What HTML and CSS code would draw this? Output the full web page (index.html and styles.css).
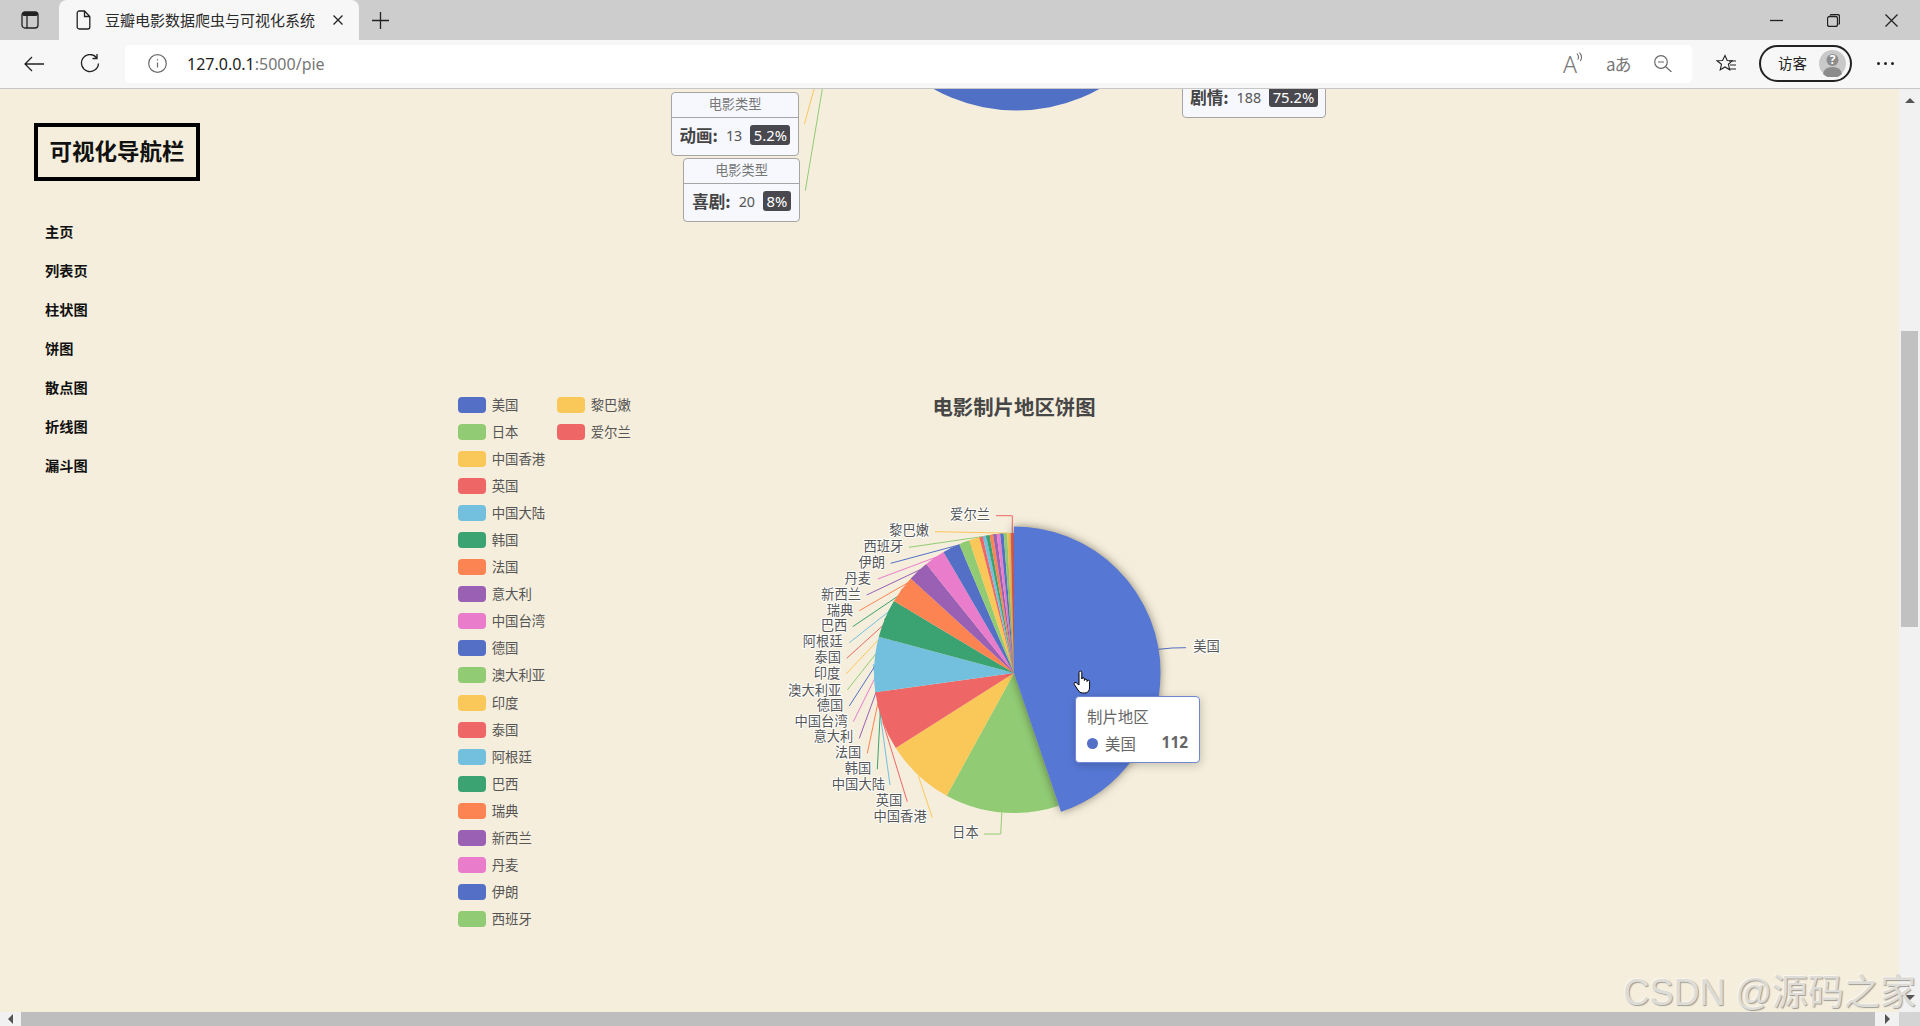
FILE: index.html
```html
<!DOCTYPE html>
<html lang="zh-CN">
<head>
<meta charset="utf-8">
<title>豆瓣电影数据爬虫与可视化系统</title>
<link rel="stylesheet" href="styles.css">
</head>
<body>
<header class="tabbar">
  <svg class="ic-tabs" viewBox="0 0 18 18"><rect x="1" y="1" width="16" height="16" rx="3" class="ink"/><rect x="1" y="1" width="16" height="4" rx="2" class="fill-ink"/><path d="M6 5v12" class="ink"/></svg>
  <div class="tab">
    <svg class="ic-doc" viewBox="0 0 15 20"><path d="M1.2 3a2 2 0 0 1 2-2h5.3l5.3 5.5V17a2 2 0 0 1-2 2H3.2a2 2 0 0 1-2-2z M8.5 1v5.5h5.3" class="ink"/></svg>
    <span class="tab-title">豆瓣电影数据爬虫与可视化系统</span>
    <svg class="ic-close" viewBox="0 0 10 10"><path d="M.5.5l9 9M9.5.5l-9 9" class="ink"/></svg>
  </div>
  <svg class="ic-plus" viewBox="0 0 17 17"><path d="M8.5 0v17M0 8.5h17" class="ink"/></svg>
  <div class="win-controls">
    <svg class="ic-min" viewBox="0 0 13 13"><path d="M0 6.5h13" class="ink"/></svg>
    <svg class="ic-restore" viewBox="0 0 13 13"><path d="M3.5 1.5V1a1 1 0 0 1 1-.5h6a2 2 0 0 1 2 2v6.500a1 1 0 0 1-.5 1h-.5" class="ink"/><rect x=".5" y="2.500" width="10" height="10" rx="2" class="ink"/></svg>
    <svg class="ic-winclose" viewBox="0 0 13 13"><path d="M.5.5l12 12M12.500.5l-12 12" class="ink"/></svg>
  </div>
</header>

<nav class="toolbar">
  <svg class="ic-back" viewBox="0 0 20 16"><path d="M20 8H1M8 1L1 8l7 7" class="ink"/></svg>
  <svg class="ic-reload" viewBox="0 0 20 19"><path d="M16.500 3.500A8.500 8.500 0 1 0 18.500 9.500M17 0v4.500h-4.500" class="ink"/></svg>
  <div class="addressbar">
    <svg class="ic-info" viewBox="0 0 19 19"><circle cx="9.500" cy="9.500" r="8.800" class="soft"/><path d="M9.500 8.500v5M9.500 5.200v1.400" class="soft"/></svg>
    <span class="url"><span class="url-host">127.0.0.1</span>:5000/pie</span>
    <span class="addr-tools">
      <span class="read-aloud"><span class="read-a">A</span><svg class="ic-waves" viewBox="0 0 8 11"><path d="M1 1.500q3 3 1 7M4 .500q4 4.500 1 9.500" class="soft"/></svg></span>
      <span class="translate">aあ</span>
      <svg class="ic-zoom" viewBox="0 0 18 17"><circle cx="7" cy="7" r="6.300" class="soft"/><path d="M4 7h6M11.500 11.500l6 5.500" class="soft"/></svg>
    </span>
  </div>
  <svg class="ic-fav" viewBox="0 0 21 19"><path d="M9 1.500l2.200 5 5 .3-3.800 3.500 1.300 5.500L9 13l-4.800 2.800 1.300-5.500L1 6.800l5.500-.3z" class="ink-thin"/><path d="M13 7h7M14 11h6M13 15h7" class="ink-thin"/></svg>
  <div class="profile">
    <span class="profile-name">访客</span>
    <span class="avatar">
      <svg class="ic-avatar" viewBox="0 0 27 27"><circle cx="13.500" cy="13.500" r="13.500" class="av-bg"/><circle cx="13.500" cy="10" r="6" class="av-fg"/><path d="M4 24q1-7 9.500-7t9.500 7a13.500 13.500 0 0 1-19 0z" class="av-fg"/></svg>
      <span class="avatar-q">?</span>
    </span>
  </div>
  <span class="more"><i></i><i></i><i></i></span>
</nav>

<div class="view-row">
  <main class="page">
    <aside class="sidebar">
      <h1 class="brand">可视化导航栏</h1>
      <ul class="nav">
        <li>主页</li><li>列表页</li><li>柱状图</li><li>饼图</li><li>散点图</li><li>折线图</li><li>漏斗图</li>
      </ul>
    </aside>

    <section class="charts">
      <svg class="chart-svg" viewBox="220 89 1679 923">
        <circle cx="1016.500" cy="-60" r="170.500" class="top-pie"/>
        <line x1="816" y1="82" x2="804.400" y2="124" class="ln c2"/>
        <line x1="823.500" y1="82" x2="805.300" y2="190.700" class="ln c1"/>

        <text x="1014" y="405.500" class="chart-title">电影制片地区饼图</text>

        <g class="lines">
          <polyline points="1158.500,649.300 1172,648 1186,647.700" class="ln c0"/>
          <polyline points="1001.800,812.500 1000.700,834 984,834" class="ln c1"/>
          <line x1="932.300" y1="817.700" x2="918.200" y2="775.400" class="ln c2"/>
          <line x1="907.300" y1="801.700" x2="882.600" y2="721.300" class="ln c3"/>
          <line x1="890" y1="785" x2="873.300" y2="664.200" class="ln c4"/>
          <line x1="877.300" y1="769.300" x2="885.200" y2="618.200" class="ln c5"/>
          <line x1="867.300" y1="753.300" x2="901.800" y2="589.200" class="ln c6"/>
          <line x1="859.300" y1="738.300" x2="918.100" y2="577.100" class="ln c7"/>
          <line x1="853.300" y1="721.700" x2="934.600" y2="557.700" class="ln c8"/>
          <line x1="849.300" y1="706" x2="951.200" y2="547.500" class="ln c0"/>
          <line x1="847.300" y1="690" x2="964" y2="542.100" class="ln c1"/>
          <line x1="846" y1="674" x2="974" y2="538.800" class="ln c2"/>
          <line x1="846.700" y1="658.300" x2="980.900" y2="537" class="ln c3"/>
          <line x1="849.300" y1="642.700" x2="984.300" y2="536.200" class="ln c4"/>
          <line x1="852.700" y1="626.700" x2="987.800" y2="535.500" class="ln c5"/>
          <line x1="859.300" y1="610.700" x2="991.200" y2="534.800" class="ln c6"/>
          <line x1="866.700" y1="595" x2="994.700" y2="534.300" class="ln c7"/>
          <line x1="877.700" y1="579" x2="998.200" y2="533.900" class="ln c8"/>
          <line x1="890.700" y1="563.300" x2="1001.700" y2="533.500" class="ln c0"/>
          <line x1="909" y1="547.300" x2="1005.200" y2="533.300" class="ln c1"/>
          <line x1="935" y1="531.700" x2="1008.700" y2="533.100" class="ln c2"/>
          <polyline points="996,515.700 1012.300,515.700 1012.300,533" class="ln c3"/>
        </g>

        <g class="pie" transform="rotate(-90 1014 673)">
          <circle cx="1014" cy="673" r="70" pathLength="250" stroke-dasharray="33 217" stroke-dashoffset="-112" class="sl c1"/>
          <circle cx="1014" cy="673" r="70" pathLength="250" stroke-dasharray="20 230" stroke-dashoffset="-145" class="sl c2"/>
          <circle cx="1014" cy="673" r="70" pathLength="250" stroke-dasharray="17 233" stroke-dashoffset="-165" class="sl c3"/>
          <circle cx="1014" cy="673" r="70" pathLength="250" stroke-dasharray="16 234" stroke-dashoffset="-182" class="sl c4"/>
          <circle cx="1014" cy="673" r="70" pathLength="250" stroke-dasharray="11 239" stroke-dashoffset="-198" class="sl c5"/>
          <circle cx="1014" cy="673" r="70" pathLength="250" stroke-dasharray="8 242" stroke-dashoffset="-209" class="sl c6"/>
          <circle cx="1014" cy="673" r="70" pathLength="250" stroke-dasharray="6 244" stroke-dashoffset="-217" class="sl c7"/>
          <circle cx="1014" cy="673" r="70" pathLength="250" stroke-dasharray="6 244" stroke-dashoffset="-223" class="sl c8"/>
          <circle cx="1014" cy="673" r="70" pathLength="250" stroke-dasharray="5 245" stroke-dashoffset="-229" class="sl c0"/>
          <circle cx="1014" cy="673" r="70" pathLength="250" stroke-dasharray="3 247" stroke-dashoffset="-234" class="sl c1"/>
          <circle cx="1014" cy="673" r="70" pathLength="250" stroke-dasharray="3 247" stroke-dashoffset="-237" class="sl c2"/>
          <circle cx="1014" cy="673" r="70" pathLength="250" stroke-dasharray="1 249" stroke-dashoffset="-240" class="sl c3"/>
          <circle cx="1014" cy="673" r="70" pathLength="250" stroke-dasharray="1 249" stroke-dashoffset="-241" class="sl c4"/>
          <circle cx="1014" cy="673" r="70" pathLength="250" stroke-dasharray="1 249" stroke-dashoffset="-242" class="sl c5"/>
          <circle cx="1014" cy="673" r="70" pathLength="250" stroke-dasharray="1 249" stroke-dashoffset="-243" class="sl c6"/>
          <circle cx="1014" cy="673" r="70" pathLength="250" stroke-dasharray="1 249" stroke-dashoffset="-244" class="sl c7"/>
          <circle cx="1014" cy="673" r="70" pathLength="250" stroke-dasharray="1 249" stroke-dashoffset="-245" class="sl c8"/>
          <circle cx="1014" cy="673" r="70" pathLength="250" stroke-dasharray="1 249" stroke-dashoffset="-246" class="sl c0"/>
          <circle cx="1014" cy="673" r="70" pathLength="250" stroke-dasharray="1 249" stroke-dashoffset="-247" class="sl c1"/>
          <circle cx="1014" cy="673" r="70" pathLength="250" stroke-dasharray="1 249" stroke-dashoffset="-248" class="sl c2"/>
          <circle cx="1014" cy="673" r="70" pathLength="250" stroke-dasharray="1 249" stroke-dashoffset="-249" class="sl c3"/>
          <circle cx="1014" cy="673" r="73.250" pathLength="250" stroke-dasharray="112 138" class="sl-hover"/>
        </g>

        <g class="labels">
          <text x="1193.300" y="646" class="lb lb-start">美国</text>
          <text x="978.700" y="832.700" class="lb">日本</text>
          <text x="926.700" y="816.700" class="lb">中国香港</text>
          <text x="902.300" y="800.700" class="lb">英国</text>
          <text x="885" y="784.700" class="lb">中国大陆</text>
          <text x="871.300" y="768.700" class="lb">韩国</text>
          <text x="861.300" y="752.700" class="lb">法国</text>
          <text x="853.300" y="736.700" class="lb">意大利</text>
          <text x="847.700" y="721.700" class="lb">中国台湾</text>
          <text x="843.300" y="705" class="lb">德国</text>
          <text x="841.300" y="690" class="lb">澳大利亚</text>
          <text x="840.300" y="673.300" class="lb">印度</text>
          <text x="841" y="657.700" class="lb">泰国</text>
          <text x="842.700" y="641.700" class="lb">阿根廷</text>
          <text x="847.300" y="625.700" class="lb">巴西</text>
          <text x="853.300" y="610" class="lb">瑞典</text>
          <text x="861" y="594.300" class="lb">新西兰</text>
          <text x="871" y="578.300" class="lb">丹麦</text>
          <text x="885" y="562" class="lb">伊朗</text>
          <text x="903.300" y="546.700" class="lb">西班牙</text>
          <text x="929" y="530" class="lb">黎巴嫩</text>
          <text x="990" y="514" class="lb">爱尔兰</text>
        </g>
      </svg>

      <div class="tip tip-a">
        <div class="tip-head">电影类型</div>
        <div class="tip-body"><b>动画:</b><span>13</span><em>5.2%</em></div>
      </div>
      <div class="tip tip-b">
        <div class="tip-head">电影类型</div>
        <div class="tip-body"><b>喜剧:</b><span>20</span><em>8%</em></div>
      </div>
      <div class="tip tip-c">
        <div class="tip-head"></div>
        <div class="tip-body"><b>剧情:</b><span>188</span><em>75.2%</em></div>
      </div>

      <ul class="legend">
        <li><i class="k0"></i>美国</li><li><i class="k1"></i>日本</li><li><i class="k2"></i>中国香港</li><li><i class="k3"></i>英国</li>
        <li><i class="k4"></i>中国大陆</li><li><i class="k5"></i>韩国</li><li><i class="k6"></i>法国</li><li><i class="k7"></i>意大利</li>
        <li><i class="k8"></i>中国台湾</li><li><i class="k0"></i>德国</li><li><i class="k1"></i>澳大利亚</li><li><i class="k2"></i>印度</li>
        <li><i class="k3"></i>泰国</li><li><i class="k4"></i>阿根廷</li><li><i class="k5"></i>巴西</li><li><i class="k6"></i>瑞典</li>
        <li><i class="k7"></i>新西兰</li><li><i class="k8"></i>丹麦</li><li><i class="k0"></i>伊朗</li><li><i class="k1"></i>西班牙</li>
        <li><i class="k2"></i>黎巴嫩</li><li><i class="k3"></i>爱尔兰</li>
      </ul>

      <div class="hover-tip">
        <div class="hover-title">制片地区</div>
        <div class="hover-row"><i></i><span>美国</span><b>112</b></div>
      </div>

      <svg class="cursor" viewBox="0 0 18 24"><path d="M6 14V2.500a1.400 1.400 0 0 1 2.800 0V9a1.300 1.300 0 0 1 2.600 0v1.500a1.300 1.300 0 0 1 2.600 0v1a1.300 1.300 0 0 1 2.600 0V17q0 6-5 6H9.500q-3 0-4.500-3L1.300 14.500q-.8-1.500.6-2 1.300-.4 2.200 1L6 15z" class="hand"/></svg>
    </section>
  </main>

  <div class="vscroll">
    <span class="arrow-up"></span>
    <span class="vthumb"></span>
    <span class="arrow-down"></span>
  </div>
</div>

<div class="hscroll">
  <span class="hbtn-left"><span class="arrow-left"></span></span>
  <span class="hthumb"></span>
  <span class="hbtn-right"><span class="arrow-right"></span></span>
  <span class="hcorner"></span>
</div>

<div class="watermark">CSDN @源码之家</div>
</body>
</html>
```

FILE: styles.css
```css
* { box-sizing: border-box; }
html, body { margin: 0; height: 100%; }
body {
  width: 1920px; height: 1026px; overflow: hidden; position: relative;
  display: flex; flex-direction: column;
  font-family: "Noto Sans", "Noto Sans CJK SC", sans-serif;
  background: #f5eedc; color: #222;
}
svg { display: block; flex: none; }
.ink { fill: none; stroke: #222; stroke-width: 1.300; }
.ink-thin { fill: none; stroke: #222; stroke-width: 1.100; }
.fill-ink { fill: #222; }
.soft { fill: none; stroke: #6a6a6a; stroke-width: 1.200; }

/* tab strip */
.tabbar { height: 40px; flex: none; background: #cdcdcd; display: flex; align-items: center; padding-left: 21px; }
.ic-tabs { width: 18px; height: 18px; }
.tab { margin-left: 20px; width: 300px; height: 40px; background: #f7f7f7; border-radius: 8px 8px 0 0; display: flex; align-items: center; padding-left: 16.500px; }
.ic-doc { width: 15px; height: 20px; }
.tab-title { margin-left: 14.500px; width: 210px; font-size: 15px; line-height: 20px; margin-top: -1px; white-space: nowrap; color: #2a2a2a; font-family: "Noto Sans CJK SC", sans-serif; }
.ic-close { margin-left: 18px; width: 10px; height: 10px; }
.ic-plus { margin-left: 13px; width: 17px; height: 17px; }
.win-controls { margin-left: auto; display: flex; align-items: center; padding-right: 22px; }
.ic-min, .ic-restore, .ic-winclose { width: 13px; height: 13px; }
.ic-restore { margin-left: 44px; }
.ic-winclose { margin-left: 45px; }

/* toolbar */
.toolbar { height: 49px; flex: none; background: #f7f7f7; border-bottom: 1px solid #c6c6c6; display: flex; align-items: center; padding: 0 0 1px 24px; }
.ic-back { width: 20px; height: 16px; margin-top: 1px; }
.ic-reload { width: 20px; height: 19px; margin-left: 36px; }
.addressbar { margin-left: 25px; width: 1567px; height: 38px; background: #fff; border-radius: 5px; display: flex; align-items: center; padding-left: 23px; }
.ic-info { width: 19px; height: 19px; }
.url { margin-left: 20px; font-size: 16px; color: #777; line-height: 20px; }
.url-host { color: #222; }
.addr-tools { margin-left: auto; display: flex; align-items: center; padding-right: 20px; color: #777; }
.read-aloud { display: flex; align-items: flex-start; width: 20px; }
.read-a { font-size: 23px; line-height: 24px; font-weight: 300; }
.ic-waves { width: 7px; height: 10px; margin-left: -1px; }
.translate { margin-left: 23px; font-size: 17px; line-height: 22px; width: 22px; white-space: nowrap; letter-spacing: -1px; font-family: "Noto Sans CJK JP", sans-serif; }
.ic-zoom { margin-left: 26px; width: 18px; height: 17px; }
.ic-fav { margin-left: 24px; width: 21px; height: 19px; }
.profile { margin-left: 22px; width: 93px; height: 37px; border: 2px solid #222; border-radius: 19px; display: flex; align-items: center; padding-left: 17px; }
.profile-name { font-size: 14.500px; width: 41px; line-height: 20px; margin-top: -1px; font-family: "Noto Sans CJK SC", sans-serif; }
.avatar { position: relative; width: 27px; height: 27px; display: block; }
.ic-avatar { width: 27px; height: 27px; }
.av-bg { fill: #c9c9c9; }
.av-fg { fill: #8c8c8c; }
.avatar-q { position: absolute; left: 0; right: 0; top: 1px; text-align: center; color: #fff; font-size: 12px; font-weight: 700; line-height: 18px; }
.more { margin-left: 25px; display: flex; gap: 4px; }
.more i { width: 3px; height: 3px; border-radius: 50%; background: #222; }

/* viewport */
.view-row { flex: 1; display: flex; min-height: 0; }
.page { flex: 1; display: flex; background: #f5eedc; overflow: hidden; min-width: 0; }
.sidebar { width: 220px; flex: none; padding: 34px 0 0 34px; }
.brand { margin: 0; width: 166px; height: 58px; border: 4px solid #000; padding-bottom: 4px; display: flex; align-items: center; justify-content: center; font-size: 22.500px; font-weight: 700; color: #111; white-space: nowrap; font-family: "Noto Sans CJK SC", sans-serif; }
.nav { list-style: none; margin: 30.500px 0 0; padding: 0 0 0 11px; }
.nav li { height: 39.100px; line-height: 39.100px; font-size: 14.200px; font-weight: 700; color: #111; font-family: "Noto Sans CJK SC", sans-serif; }

/* chart canvas: every item below lives on the free chart surface */
.charts { flex: 1; position: relative; min-width: 0; font-family: "Noto Sans", "Noto Sans CJK SC", sans-serif; }
.chart-svg { position: absolute; left: 0; top: 0; width: 1679px; height: 923px; }
.top-pie { fill: #5070c5; }
.chart-title { font-size: 20.400px; font-weight: 700; fill: #464646; text-anchor: middle; dominant-baseline: central; font-family: "Noto Sans CJK SC", sans-serif; }
.ln { fill: none; stroke-width: 1; }
.sl, .sl-hover { fill: none; }
.sl { stroke-width: 140; }
.sl-hover { stroke: #5677d4; stroke-width: 146.500; filter: drop-shadow(0 0 5px rgba(40, 30, 10, .5)); }
.c0 { stroke: #5470c6; } .c1 { stroke: #91cc75; } .c2 { stroke: #fac858; }
.c3 { stroke: #ee6666; } .c4 { stroke: #73c0de; } .c5 { stroke: #3ba272; }
.c6 { stroke: #fc8452; } .c7 { stroke: #9a60b4; } .c8 { stroke: #ea7ccc; }
.labels { transform: translateY(-1px); }
.lb { font-size: 13.300px; fill: #555; text-anchor: end; dominant-baseline: central; paint-order: stroke; stroke: #fff; stroke-width: 2px; stroke-linejoin: round; font-family: "Noto Sans CJK SC", sans-serif; }
.lb-start { text-anchor: start; }

/* legend */
.legend { position: absolute; left: 237.700px; top: 301.500px; margin: 0; padding: 0; list-style: none; display: grid; grid-auto-flow: column; grid-template-rows: repeat(20, 27.050px); grid-template-columns: 99px auto; font-size: 13.400px; color: #555; font-family: "Noto Sans CJK SC", sans-serif; }
.legend li { display: flex; align-items: center; white-space: nowrap; }
.legend i { width: 28px; height: 16px; border-radius: 4px; margin-right: 6px; flex: none; position: relative; top: 1px; }
.k0 { background: #5470c6; } .k1 { background: #91cc75; } .k2 { background: #fac858; }
.k3 { background: #ee6666; } .k4 { background: #73c0de; } .k5 { background: #3ba272; }
.k6 { background: #fc8452; } .k7 { background: #9a60b4; } .k8 { background: #ea7ccc; }

/* label tooltips */
.tip { position: absolute; background: #f6f8fd; border: 1px solid #a5a5a5; border-radius: 4px; color: #555; font-family: "Noto Sans CJK SC", sans-serif; }
.tip-a { left: 451px; top: 3px; width: 128px; height: 64px; }
.tip-b { left: 463px; top: 69px; width: 117px; height: 64px; }
.tip-c { left: 962px; top: -35px; width: 144px; height: 64px; }
.tip-head { height: 25px; border-bottom: 1px solid #a5a5a5; text-align: center; font-size: 13.200px; line-height: 22px; color: #777; }
.tip-body { height: 37px; display: flex; align-items: center; justify-content: center; gap: 8px; padding-bottom: 3px; }
.tip-body b { font-size: 16.500px; font-weight: 700; color: #444; }
.tip-body span { font-size: 14.300px; color: #555; font-family: "Noto Sans", sans-serif; }
.tip-body em { font-style: normal; background: #48484e; color: #fff; border-radius: 3px; font-size: 14.800px; line-height: 20.500px; padding: 0 3.500px; font-family: "Noto Sans", sans-serif; }

/* hovered-slice tooltip */
.hover-tip { position: absolute; left: 855px; top: 607px; width: 125px; height: 67px; background: #fff; border: 1px solid #6e87cf; border-radius: 4px; box-shadow: 1px 2px 10px rgba(0, 0, 0, .2); padding: 0 11px; color: #666; font-family: "Noto Sans CJK SC", sans-serif; font-size: 15.400px; }
.hover-title { height: 20px; line-height: 20px; margin-top: 9px; }
.hover-row { display: flex; align-items: center; margin-top: 7px; height: 20px; line-height: 20px; }
.hover-row i { width: 11px; height: 11px; border-radius: 50%; background: #5470c6; margin-right: 7px; }
.hover-row b { margin-left: auto; font-weight: 700; font-family: "Noto Sans", sans-serif; }

.cursor { position: absolute; left: 853px; top: 581px; width: 18px; height: 24px; }
.hand { fill: #fff; stroke: #000; stroke-width: 1; }

/* scrollbars */
.vscroll { width: 21px; flex: none; background: #f1f1f1; display: flex; flex-direction: column; align-items: center; }
.arrow-up { margin-top: 9px; border: 5px solid transparent; border-top: 0; border-bottom: 5px solid #555; }
.vthumb { margin-top: 228px; width: 17px; height: 296px; background: #c1c1c1; }
.arrow-down { margin-top: auto; margin-bottom: 12px; border: 5px solid transparent; border-bottom: 0; border-top: 5px solid #555; }
.hscroll { height: 14px; flex: none; background: #f1f1f1; display: flex; align-items: stretch; }
.hbtn-left { width: 21px; display: flex; align-items: center; justify-content: center; }
.hthumb { flex: 1; background: #bebebe; }
.hbtn-right { width: 24px; display: flex; align-items: center; justify-content: center; }
.hcorner { width: 21px; background: #d4d4d4; }
.arrow-left { border: 5px solid transparent; border-left: 0; border-right: 5px solid #555; }
.arrow-right { border: 5px solid transparent; border-right: 0; border-left: 5px solid #555; }

.watermark { position: absolute; right: 4px; top: 970px; font-size: 36px; line-height: 46px; color: #dedcd6; text-shadow: 1px 1px 1px rgba(110, 110, 110, .65), -1px -1px 0 rgba(255, 255, 255, .5); white-space: nowrap; font-family: "Liberation Sans", "Noto Sans CJK SC", sans-serif; pointer-events: none; }
```
